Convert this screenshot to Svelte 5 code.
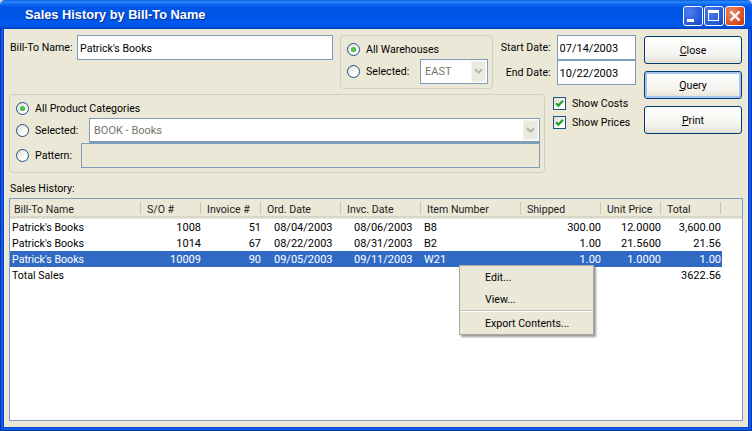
<script>
  const rows = [
    { name: "Patrick's Books", so: '1008', inv: '51', ord: '08/04/2003', invc: '08/06/2003', item: 'B8', shipped: '300.00', price: '12.0000', total: '3,600.00' },
    { name: "Patrick's Books", so: '1014', inv: '67', ord: '08/22/2003', invc: '08/31/2003', item: 'B2', shipped: '1.00', price: '21.5600', total: '21.56' },
    { name: "Patrick's Books", so: '10009', inv: '90', ord: '09/05/2003', invc: '09/11/2003', item: 'W21', shipped: '1.00', price: '1.0000', total: '1.00', selected: true },
    { name: 'Total Sales', so: '', inv: '', ord: '', invc: '', item: '', shipped: '', price: '', total: '3622.56' }
  ];
  const headers = ['Bill-To Name', 'S/O #', 'Invoice #', 'Ord. Date', 'Invc. Date', 'Item Number', 'Shipped', 'Unit Price', 'Total'];
</script>

{#snippet check()}
  <span class="check">
    <svg width="11" height="11" viewBox="0 0 11 11"><path d="M2 5.2 L4.4 7.6 L9 2.8" fill="none" stroke="#21a121" stroke-width="2.2" /></svg>
  </span>
{/snippet}

{#snippet arrow()}
  <span class="arrow">
    <svg width="9" height="7" viewBox="0 0 9 7"><path d="M1 1.2 L4.5 4.7 L8 1.2" fill="none" stroke="#b5b3a8" stroke-width="2" /></svg>
  </span>
{/snippet}

<div class="window">
  <div class="titlebar">
    <span class="title">Sales History by Bill-To Name</span>
    <div class="winbtns">
      <span class="winbtn"><svg width="18" height="18" viewBox="0 0 18 18"><rect x="3" y="12" width="7" height="3" fill="#fff" /></svg></span>
      <span class="winbtn"><svg width="18" height="18" viewBox="0 0 18 18"><rect x="3.5" y="3.5" width="10" height="10" fill="none" stroke="#fff" /><rect x="3" y="3" width="11" height="3" fill="#fff" /></svg></span>
      <span class="winbtn close"><svg width="18" height="18" viewBox="0 0 18 18"><path d="M4.5 4.5 L13.5 13.5 M13.5 4.5 L4.5 13.5" stroke="#fff" stroke-width="2.4" /></svg></span>
    </div>
  </div>

  <div class="client">
    <div class="top">
      <div class="fields">
        <div class="row-one">
          <div class="billto">
            <span class="billto-label">Bill-To Name:</span>
            <span class="input billto-input">Patrick's Books</span>
          </div>
          <div class="group warehouses">
            <div class="opt"><span class="radio on"></span><span class="opt-label">All Warehouses</span></div>
            <div class="opt">
              <span class="radio"></span><span class="opt-label wh-sel">Selected:</span>
              <span class="combo wh-combo"><span class="muted">EAST</span>{@render arrow()}</span>
            </div>
          </div>
          <div class="dates">
            <div class="date"><span class="date-label">Start Date:</span><span class="input date-input">07/14/2003</span></div>
            <div class="date"><span class="date-label">End Date:</span><span class="input date-input">10/22/2003</span></div>
          </div>
        </div>
        <div class="row-two">
          <div class="group categories">
            <div class="opt cat-first"><span class="radio on"></span><span class="opt-label">All Product Categories</span></div>
            <div class="opt cat-row">
              <span class="radio"></span><span class="opt-label sel-label">Selected:</span>
              <span class="combo cat-combo"><span class="muted">BOOK - Books</span>{@render arrow()}</span>
            </div>
            <div class="opt cat-row">
              <span class="radio"></span><span class="opt-label pat-label">Pattern:</span>
              <span class="pattern"></span>
            </div>
          </div>
          <div class="checks">
            <div class="check-row">{@render check()}<span>Show Costs</span></div>
            <div class="check-row">{@render check()}<span>Show Prices</span></div>
          </div>
        </div>
      </div>
      <div class="buttons">
        <button class="btn"><u>C</u>lose</button>
        <button class="btn default"><u>Q</u>uery</button>
        <button class="btn"><u>P</u>rint</button>
      </div>
    </div>

    <div class="list-label">Sales History:</div>
    <div class="list">
      <div class="head">
        {#each headers as h}
          <span class="head-cell">{h}</span>
        {/each}
      </div>
      <div class="body">
        {#each rows as r}
          <div class="tr" class:selected={r.selected}>
            <span class="name">{r.name}</span>
            <span class="num">{r.so}</span>
            <span class="num">{r.inv}</span>
            <span class="dt">{r.ord}</span>
            <span class="dt">{r.invc}</span>
            <span class="item">{r.item}</span>
            <span class="num">{r.shipped}</span>
            <span class="num">{r.price}</span>
            <span class="num">{r.total}</span>
          </div>
        {/each}
      </div>

      <div class="menu">
        <div class="menu-item">Edit...</div>
        <div class="menu-item">View...</div>
        <div class="menu-sep"></div>
        <div class="menu-item">Export Contents...</div>
      </div>
    </div>
  </div>
</div>

<style>
  :global(body) {
    margin: 0;
    background: #fff;
  }

  .window {
    width: 752px;
    height: 431px;
    display: flex;
    flex-direction: column;
    font-family: Roboto, "Liberation Sans", Arial, sans-serif;
    font-size: 10.6px;
    color: #000;
    background: #d8d8e4;
  }

  .titlebar {
    position: relative;
    z-index: 1;
    height: 29px;
    flex-shrink: 0;
    display: flex;
    align-items: center;
    justify-content: space-between;
    padding: 0 7px 0 25px;
    box-sizing: border-box;
    border-radius: 5px 5px 0 0;
    background: linear-gradient(180deg, #0a5be0 0, #2c8cfb 2px, #0f6bf0 4px, #0058e8 7px, #0054e3 50%, #0058ee 85%, #0350d8 93%, #003ec0 100%);
  }

  .title {
    font-family: "Liberation Sans", Arial, sans-serif;
    font-weight: bold;
    font-size: 12.8px;
    color: #fff;
    text-shadow: 1px 1px 0 #0a2f9e;
    white-space: nowrap;
  }

  .winbtns {
    display: flex;
    gap: 1px;
    margin-top: 3px;
  }

  .winbtn {
    width: 20px;
    height: 20px;
    box-sizing: border-box;
    border: 1px solid #fff;
    border-radius: 3px;
    background: radial-gradient(circle at 30% 30%, #4f7ff0, #2457d8 70%, #1a3fb8);
    display: block;
    line-height: 0;
  }

  .close {
    background: radial-gradient(circle at 30% 30%, #ee8a68, #d84a20 70%, #b8300c);
  }

  .client {
    flex: 1;
    min-height: 0;
    margin: 0 4px 4px 4px;
    background: #ebe8d8;
    padding: 6px 5px 6px 5px;
    box-sizing: border-box;
    display: flex;
    flex-direction: column;
    box-shadow: 0 0 0 1px #0a45d0, 0 0 0 3px #0a5ae8, 0 0 0 4px #0831b0;
  }

  .top {
    display: flex;
    height: 143px;
  }

  .fields {
    width: 627px;
    flex-shrink: 0;
  }

  .row-one {
    display: flex;
    height: 54px;
  }

  .billto {
    display: flex;
    width: 331px;
    flex-shrink: 0;
  }

  .billto-label {
    width: 68px;
    padding: 6px 0 0 1px;
    box-sizing: border-box;
    white-space: nowrap;
  }

  .input {
    display: block;
    height: 25px;
    line-height: 25px;
    box-sizing: border-box;
    border: 1px solid #7f9db9;
    background: #fff;
    padding: 0 2px;
    white-space: nowrap;
  }

  .billto-input {
    width: 256px;
  }

  .group {
    border: 1px solid #d0d0bf;
    border-radius: 4px;
    box-sizing: border-box;
  }

  .warehouses {
    width: 153px;
    height: 54px;
    padding: 2px 0 0 6px;
    flex-shrink: 0;
  }

  .opt {
    display: flex;
    align-items: center;
    height: 22px;
  }

  .radio {
    position: relative;
    width: 13px;
    height: 13px;
    flex-shrink: 0;
    border: 1px solid #1c5180;
    border-radius: 50%;
    box-sizing: border-box;
    background: linear-gradient(135deg, #dcdcd7, #fff 70%);
    margin-right: 6px;
  }

  .on::after {
    content: '';
    position: absolute;
    left: 3px;
    top: 3px;
    width: 5px;
    height: 5px;
    border-radius: 50%;
    background: radial-gradient(circle, #58d858, #21a121);
  }

  .wh-sel {
    width: 54px;
  }

  .combo {
    display: flex;
    align-items: center;
    justify-content: space-between;
    box-sizing: border-box;
    border: 1px solid #7f9db9;
    background: #fff;
    padding: 0 1px 0 4px;
    font-size: 11px;
  }

  .wh-combo {
    width: 68px;
    height: 25px;
    margin-top: 1px;
  }

  .muted {
    color: #76746a;
  }

  .arrow {
    width: 15px;
    height: calc(100% - 2px);
    display: flex;
    align-items: center;
    justify-content: center;
    background: #ece9e0;
    border: 1px solid #f4f2ea;
    box-sizing: border-box;
  }

  .dates {
    margin-left: 7px;
    width: 136px;
  }

  .date {
    display: flex;
    height: 25px;
  }

  .date-label {
    width: 57px;
    text-align: right;
    padding: 6px 6px 0 0;
    box-sizing: border-box;
    white-space: nowrap;
  }

  .date-input {
    width: 80px;
    font-size: 11px;
  }

  .row-two {
    display: flex;
    margin-top: 5px;
  }

  .categories {
    width: 536px;
    height: 79px;
    padding: 3px 4px 0 6px;
    flex-shrink: 0;
  }

  .cat-first {
    height: 20px;
  }

  .cat-row {
    height: 25px;
  }

  .sel-label {
    width: 54px;
  }

  .pat-label {
    width: 46px;
  }

  .cat-combo {
    width: 451px;
    height: 25px;
    border-width: 1px 1px 2px 1px;
  }

  .pattern {
    display: block;
    width: 459px;
    height: 25px;
    border: 1px solid #7f9db9;
    box-sizing: border-box;
  }

  .checks {
    margin-left: 8px;
  }

  .check-row {
    display: flex;
    align-items: center;
    height: 19px;
    gap: 6px;
  }

  .check {
    width: 13px;
    height: 13px;
    border: 1px solid #1c5180;
    box-sizing: border-box;
    background: linear-gradient(135deg, #dcdcd7, #fff 70%);
    display: block;
    line-height: 0;
  }

  .buttons {
    margin-left: 8px;
    padding-top: 1px;
    display: flex;
    flex-direction: column;
    gap: 7px;
  }

  .btn {
    width: 98px;
    height: 28px;
    padding: 0;
    font: inherit;
    color: #000;
    border: 1px solid #003c74;
    border-radius: 3px;
    background: linear-gradient(180deg, #fff 0, #f4f3ee 70%, #e3e0d2 100%);
  }

  .default {
    box-shadow: inset 0 0 0 2px #a9c4f0;
  }

  .list-label {
    margin-top: 3px;
    padding-left: 1px;
    height: 15px;
    line-height: 16px;
  }

  .list {
    position: relative;
    flex: 1;
    min-height: 0;
    margin-top: 2px;
    border: 1px solid #7f9db9;
    background: #fff;
    width: 734px;
    box-sizing: border-box;
  }

  .head,
  .tr {
    display: grid;
    grid-template-columns: 131px 60px 60px 80px 80px 100px 80px 60px 60px;
  }

  .head {
    height: 20px;
    background: linear-gradient(180deg, #ebe8d8 0, #ebe8d8 17px, #d6d2c2 17px, #dedbcc 19px, #f2f0e8 20px);
  }

  .head-cell {
    position: relative;
    padding: 4px 0 0 6px;
    color: #222;
    box-sizing: border-box;
    white-space: nowrap;
  }

  .head-cell:first-child {
    padding-left: 4px;
  }

  .head-cell::after {
    content: '';
    position: absolute;
    right: 0;
    top: 3px;
    bottom: 5px;
    width: 1px;
    background: #c8c6b4;
  }

  .tr {
    height: 16px;
    line-height: 18px;
    width: 712px;
    white-space: nowrap;
  }

  .selected {
    background: #316ac5;
    color: #fff;
  }

  .name {
    padding-left: 2px;
  }

  .num {
    text-align: right;
    font-size: 11px;
  }

  .dt {
    padding-left: 13px;
    font-size: 11px;
  }

  .item {
    padding-left: 3px;
    font-size: 11px;
  }

  .menu {
    position: absolute;
    left: 449px;
    top: 66px;
    width: 135px;
    height: 70px;
    box-sizing: border-box;
    background: #ebe8d8;
    border: 1px solid #aca899;
    box-shadow: 2px 2px 2px rgba(0, 0, 0, 0.4);
  }

  .menu-item {
    height: 22px;
    line-height: 24px;
    padding-left: 25px;
    white-space: nowrap;
  }

  .menu-sep {
    height: 2px;
    background: #c4c1b0;
    border-bottom: 1px solid #fff;
    box-sizing: border-box;
  }
</style>
